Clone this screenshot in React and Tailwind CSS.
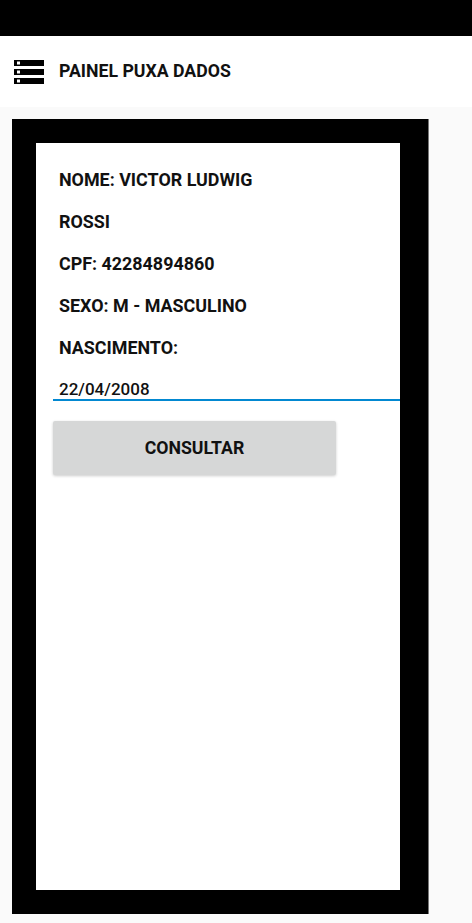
export default function App() {
  const rows = ["NOME: VICTOR LUDWIG", "ROSSI", "CPF: 42284894860", "SEXO: M - MASCULINO", "NASCIMENTO:"];
  return (
    <div className="w-[472px] h-[923px] bg-[#fafafa] font-['Roboto',sans-serif] text-[#111] overflow-hidden">
      <div className="h-[36px] bg-black" />
      <header className="h-[71px] bg-white flex items-center">
        <svg viewBox="0 0 24 24" className="w-[36px] h-[36px] ml-[11px] mt-[1px]" fill="#000">
          <path d="M2 20h20v-4H2v4zm2-3h2v2H4v-2zM2 4v4h20V4H2zm4 3H4V5h2v2zm-4 7h20v-4H2v4zm2-3h2v2H4v-2z" />
        </svg>
        <span className="ml-[12px] text-[17.7px] font-bold">PAINEL PUXA DADOS</span>
      </header>
      <div className="pt-[12px] pl-[12px]">
        <div className="w-[417px] h-[795px] bg-black pt-[24px] pl-[24px] pr-[28px] pb-[24px] border-r border-[#777]">
          <div className="bg-white h-full pl-[17px] pt-[16px]">
            {rows.map((r) => (
              <div key={r} className="pl-[6px] h-[42px] leading-[42px] text-[17.9px] font-bold">{r}</div>
            ))}
            <div className="h-[32px] border-b-2 border-[#0288d1] pl-[6px]">
              <span className="block leading-[40px] text-[17px] font-medium">22/04/2008</span>
            </div>
            <button className="mt-[20px] w-[283px] h-[54px] bg-[#d6d7d7] rounded-[2px] shadow-[0_1px_3px_rgba(0,0,0,0.2)] text-[17.7px] font-bold">
              CONSULTAR
            </button>
          </div>
        </div>
      </div>
    </div>
  );
}
